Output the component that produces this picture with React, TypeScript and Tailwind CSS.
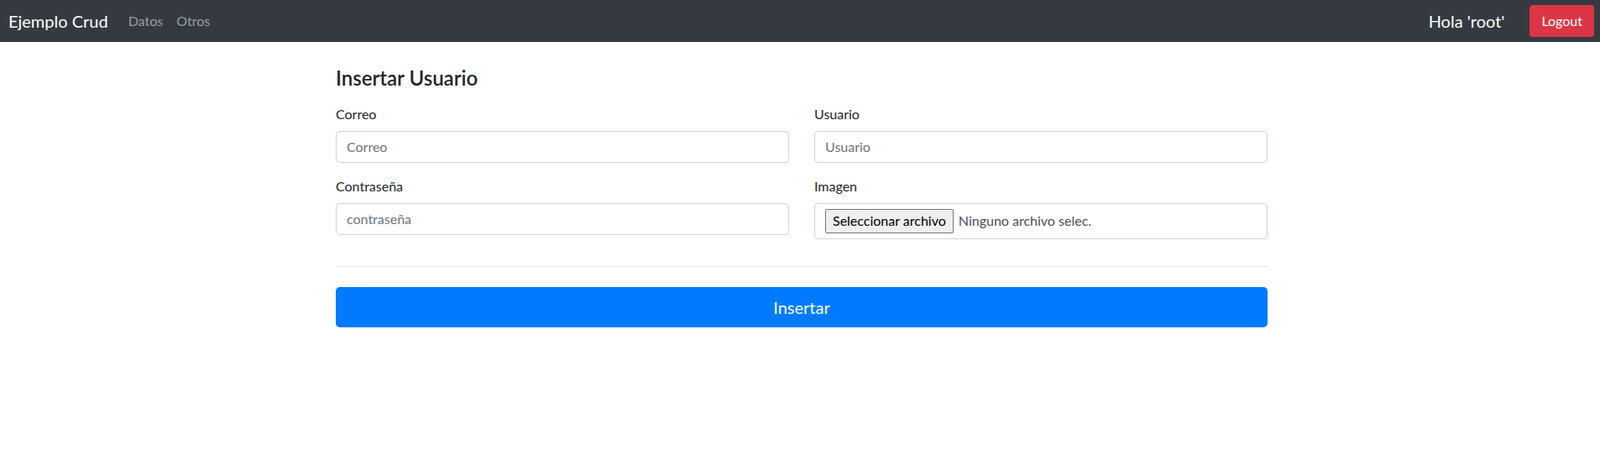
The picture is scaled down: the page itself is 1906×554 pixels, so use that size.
import React from "react";

const font = { fontFamily: 'Lato, "Noto Sans", sans-serif' };

const Field: React.FC<{ label: string; placeholder: string }> = ({ label, placeholder }) => (
    <div className="mb-4">
        <label className="block text-[16px] leading-6 mb-2 text-[#212529]">{label}</label>
        <input
            placeholder={placeholder}
            className="block w-full h-[38px] px-3 text-[16px] border border-[#ced4da] rounded-[4px] text-[#495057] placeholder:text-[#6c757d] outline-none"
        />
    </div>
);

const App: React.FC = () => {
    return (
        <div className="min-h-[554px] bg-white" style={font}>
            <nav className="flex items-center justify-between h-[50px] bg-[#343a40] pl-[10px] pr-[7px]">
                <div className="flex items-center">
                    <span className="text-[20px] text-white mr-4">Ejemplo Crud</span>
                    <a className="px-2 text-[16px] text-white/50">Datos</a>
                    <a className="px-2 text-[16px] text-white/50">Otros</a>
                </div>
                <div className="flex items-center gap-[30px]">
                    <span className="text-[20px] text-white">Hola 'root'</span>
                    <button className="h-[38px] px-[14px] rounded-[4px] bg-[#dc3545] text-white text-[16px]">
                        Logout
                    </button>
                </div>
            </nav>

            <div className="flex justify-center pl-[4px]">
                <div className="w-[1110px] pt-[29px]">
                    <h4 className="text-[24px] leading-[1.2] font-semibold text-[#212529] mb-4">Insertar Usuario</h4>
                    <div className="grid grid-cols-2 gap-x-[30px]">
                        <div>
                            <Field label="Correo" placeholder="Correo" />
                            <Field label="Contraseña" placeholder="contraseña" />
                        </div>
                        <div>
                            <Field label="Usuario" placeholder="Usuario" />
                            <div className="mb-4">
                                <label className="block text-[16px] leading-6 mb-2 text-[#212529]">Imagen</label>
                                <div className="flex items-center gap-[6px] h-[43px] px-3 border border-[#ced4da] rounded-[4px]">
                                    <span className="h-[29px] px-2 flex items-center text-[16px] text-black bg-[#efefef] border border-[#767676] rounded-[2px]">
                                        Seleccionar archivo
                                    </span>
                                    <span className="text-[16px] text-[#495057]">Ninguno archivo selec.</span>
                                </div>
                            </div>
                        </div>
                    </div>
                    <hr className="mt-4 border-t border-[#e5e5e5]" />
                    <button className="mt-6 w-full h-[48px] rounded-[5px] bg-[#007bff] text-white text-[20px]">
                        Insertar
                    </button>
                </div>
            </div>
        </div>
    );
};

export default App;
